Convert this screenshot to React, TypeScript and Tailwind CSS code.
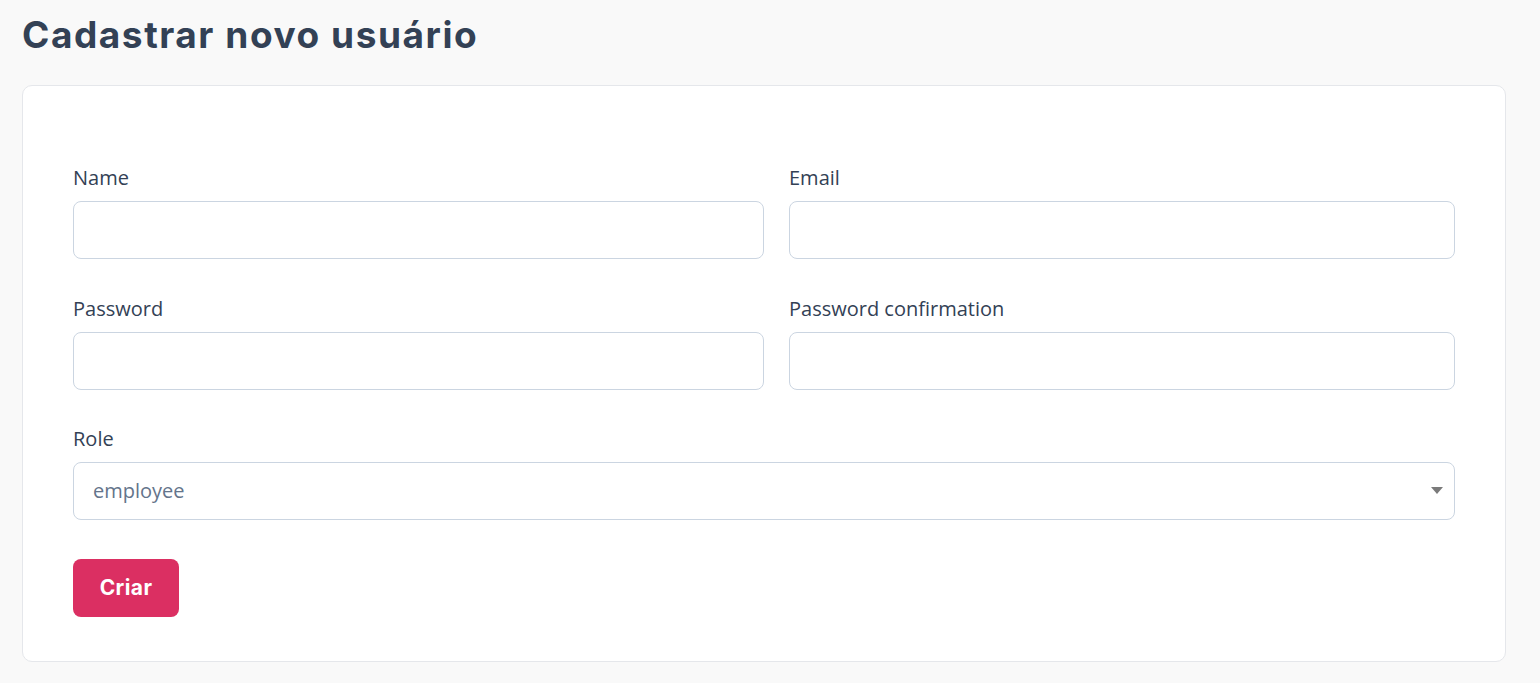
import { useState } from "react";

const labelCls = "block text-[20px] leading-[28px] text-[#334155] mb-[9px]";
const boxCls =
  "block w-full h-[58px] rounded-[8px] border border-[#cbd5e1] bg-white px-5 text-[20px] outline-none";

const App = () => {
  const [role, setRole] = useState("employee");

  return (
    <div className="min-h-screen bg-[#f9f9f9] pl-[22px] pr-[34px] pt-[12px] pb-[21px] font-['Open_Sans',sans-serif]">
      {/* Title */}
      <h1 className="text-[37px] leading-[46px] font-bold tracking-[1.55px] text-[#334155] font-['Inter',sans-serif]">
        Cadastrar novo usuário
      </h1>

      {/* Card */}
      <div className="mt-[27px] rounded-[10px] border border-[#e5e7eb] bg-white px-[50px] pt-[78px] pb-[44px]">
        <div className="grid grid-cols-[691px_666px] gap-x-[25px] gap-y-[36px]">
          <div>
            <label className={labelCls}>Name</label>
            <input className={boxCls + " text-[#334155]"} type="text" />
          </div>
          <div>
            <label className={labelCls}>Email</label>
            <input className={boxCls + " text-[#334155]"} type="email" />
          </div>
          <div>
            <label className={labelCls}>Password</label>
            <input className={boxCls + " text-[#334155]"} type="password" />
          </div>
          <div>
            <label className={labelCls}>Password confirmation</label>
            <input className={boxCls + " text-[#334155]"} type="password" />
          </div>
        </div>

        <div className="mt-[35px]">
          <label className={labelCls}>Role</label>
          <div className="relative">
            <select
              value={role}
              onChange={(e) => setRole(e.target.value)}
              className="block w-full h-[58px] rounded-[8px] border border-[#cbd5e1] bg-white pl-[19px] pr-10 text-[20px] text-[#64748b] outline-none appearance-none"
            >
              <option value="employee">employee</option>
              <option value="admin">admin</option>
            </select>
            <svg
              className="pointer-events-none absolute right-[12px] top-[25px]"
              width="12"
              height="7"
              viewBox="0 0 12 7"
            >
              <path d="M0 0h12L6 7z" fill="#7a7a7a" />
            </svg>
          </div>
        </div>

        <button className="mt-[39px] h-[58px] w-[106px] rounded-[8px] bg-[#db2f62] text-[21px] font-bold tracking-[0.4px] text-white font-['Inter',sans-serif]">
          Criar
        </button>
      </div>
    </div>
  );
};

export default App;
